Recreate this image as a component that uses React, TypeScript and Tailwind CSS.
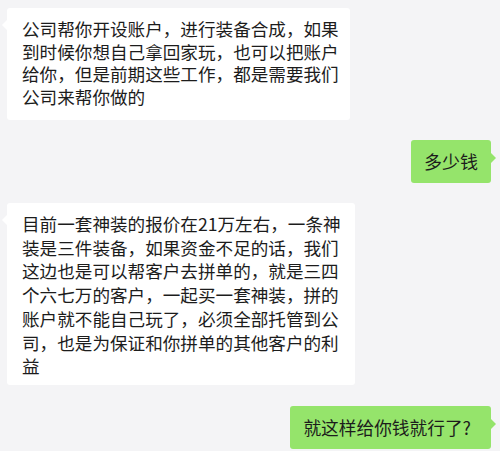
import React from 'react';

const font = { fontFamily: '"Noto Sans CJK SC", "Noto Sans", sans-serif' };

const LeftBubble = ({ lines, className }: { lines: string[]; className: string }) => (
  <div className={`relative self-start ml-[7px] bg-white rounded-[3px] text-[#1c1c1c] ${className}`}>
    <span className="absolute -left-[5px] top-[12px] w-0 h-0 border-y-[5px] border-y-transparent border-r-[5px] border-r-white" />
    {lines.map((l, i) => (
      <div key={i} className="whitespace-nowrap">{l}</div>
    ))}
  </div>
);

const RightBubble = ({ text, className }: { text: string; className: string }) => (
  <div className={`relative self-end mr-[9px] bg-[#95e46b] rounded-[3px] text-[#1c1c1c] whitespace-nowrap ${className}`}>
    <span className="absolute -right-[5px] top-[13px] w-0 h-0 border-y-[5px] border-y-transparent border-l-[5px] border-l-[#95e46b]" />
    {text}
  </div>
);

export default function App() {
  return (
    <div className="w-[500px] h-[451px] overflow-hidden bg-[#f4f4f6] flex flex-col pt-[8px]" style={font}>
      <LeftBubble
        className="w-[343px] h-[112px] pl-[15px] pt-[10px] text-[17.6px] leading-[22.7px]"
        lines={[
          '公司帮你开设账户，进行装备合成，如果',
          '到时候你想自己拿回家玩，也可以把账户',
          '给你，但是前期这些工作，都是需要我们',
          '公司来帮你做的',
        ]}
      />
      <RightBubble className="mt-[20px] h-[43px] px-[13px] flex items-center text-[18px]" text="多少钱" />
      <LeftBubble
        className="mt-[20px] w-[348px] h-[182px] pl-[15px] pt-[9px] text-[17.6px] leading-[23.7px]"
        lines={[
          '目前一套神装的报价在21万左右，一条神',
          '装是三件装备，如果资金不足的话，我们',
          '这边也是可以帮客户去拼单的，就是三四',
          '个六七万的客户，一起买一套神装，拼的',
          '账户就不能自己玩了，必须全部托管到公',
          '司，也是为保证和你拼单的其他客户的利',
          '益',
        ]}
      />
      <RightBubble className="mt-[21px] h-[43px] pl-[13px] pr-[20px] flex items-center text-[17.7px]" text="就这样给你钱就行了?" />
    </div>
  );
}
